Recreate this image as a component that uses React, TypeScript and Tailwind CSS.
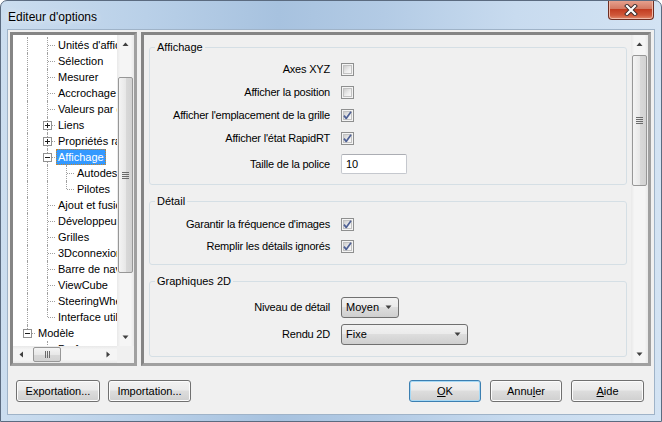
import React from 'react';

type Cell = 'none' | 'line' | 'tee' | 'elbow' | 'plus' | 'minus' | 'minusEnd';

type TreeRow = {
  label: string;
  cells: Cell[];
  selected?: boolean;
};

const FONT = "font-['Liberation_Sans',Arial,sans-serif]";

const CELL_W = ['w-[23px]', 'w-[20px]', 'w-[19px]'];
const V_LEFT = ['left-[14px]', 'left-[11px]', 'left-[10px]'];
const BOX_LEFT = ['left-[10px]', 'left-[7px]', 'left-[6px]'];
const H_FROM_LINE = ['left-[15px]', 'left-[12px]', 'left-[11px]'];
const H_FROM_BOX = ['left-[19px]', 'left-[16px]', 'left-[15px]'];

const L2: Cell[] = ['line', 'tee'];

const TREE_ROWS: TreeRow[] = [
  { label: "Unités d'affichage", cells: L2 },
  { label: 'Sélection', cells: L2 },
  { label: 'Mesurer', cells: L2 },
  { label: 'Accrochage', cells: L2 },
  { label: 'Valeurs par défaut', cells: L2 },
  { label: 'Liens', cells: ['line', 'plus'] },
  { label: 'Propriétés rapides', cells: ['line', 'plus'] },
  { label: 'Affichage', cells: ['line', 'minus'], selected: true },
  { label: 'Autodesk', cells: ['line', 'line', 'tee'] },
  { label: 'Pilotes', cells: ['line', 'line', 'elbow'] },
  { label: 'Ajout et fusion', cells: L2 },
  { label: 'Développeur', cells: L2 },
  { label: 'Grilles', cells: L2 },
  { label: '3Dconnexion', cells: L2 },
  { label: 'Barre de navigation', cells: L2 },
  { label: 'ViewCube', cells: L2 },
  { label: 'SteeringWheels', cells: L2 },
  { label: 'Interface utilisateur', cells: ['line', 'elbow'] },
  { label: 'Modèle', cells: ['minusEnd'] },
  { label: 'Performance', cells: ['none', 'tee'] },
];

const BUTTON_BG =
  'bg-[linear-gradient(#f2f2f2,#ebebeb_45%,#dddddd_50%,#cfcfcf)]';

function TreeCell({ type, index }: { type: Cell; index: number }) {
  const full = type === 'line' || type === 'tee' || type === 'plus' || type === 'minus';
  const half = type === 'elbow' || type === 'minusEnd';
  const box = type === 'plus' || type === 'minus' || type === 'minusEnd';
  const horiz = type !== 'none' && type !== 'line';
  const dotted = 'border-dotted border-[#a0a0a0]';

  return (
    <div className={`relative h-full shrink-0 ${CELL_W[index]}`}>
      {full && <div className={`absolute top-0 bottom-0 w-0 border-l ${dotted} ${V_LEFT[index]}`} />}
      {half && <div className={`absolute top-0 h-[8px] w-0 border-l ${dotted} ${V_LEFT[index]}`} />}
      {horiz && (
        <div
          className={`absolute top-[8px] right-[1px] h-0 border-t ${dotted} ${box ? H_FROM_BOX[index] : H_FROM_LINE[index]}`}
        />
      )}
      {box && (
        <div className={`absolute top-[4px] h-[9px] w-[9px] border border-[#919191] bg-white ${BOX_LEFT[index]}`}>
          <div className="absolute left-[1px] top-[3px] h-[1px] w-[5px] bg-[#1e1e1e]" />
          {type === 'plus' && <div className="absolute left-[3px] top-[1px] h-[5px] w-[1px] bg-[#1e1e1e]" />}
        </div>
      )}
    </div>
  );
}

function Arrow({ dir }: { dir: 'up' | 'down' | 'left' | 'right' }) {
  const points = {
    up: '0.5,4 3.5,0.5 6.5,4',
    down: '0.5,0.5 3.5,4 6.5,0.5',
    left: '4,0.5 0.5,3.5 4,6.5',
    right: '0.5,0.5 4,3.5 0.5,6.5',
  }[dir];
  const vertical = dir === 'up' || dir === 'down';
  return (
    <svg width={vertical ? 7 : 5} height={vertical ? 5 : 7} viewBox={vertical ? '0 0 7 5' : '0 0 5 7'}>
      <polygon points={points} fill="#404040" />
    </svg>
  );
}

function VScrollbar({ thumbTop, thumbHeight }: { thumbTop: string; thumbHeight: string }) {
  return (
    <div className="flex w-[17px] shrink-0 flex-col bg-[#f0f0f0] bg-[linear-gradient(to_right,#e9e9e9,#f5f5f5_20%,#f5f5f5_80%,#e9e9e9)]">
      <div className="flex h-[17px] items-center justify-center pt-[2px]">
        <Arrow dir="up" />
      </div>
      <div className="flex-1">
        <div
          className={`mx-auto flex w-[15px] flex-col items-center justify-center gap-[1px] rounded-[2px] border border-[#979797] bg-[linear-gradient(to_right,#f4f4f4,#e8e8e8_50%,#d9d9d9_50%,#d2d2d2)] ${thumbTop} ${thumbHeight}`}
        >
          <div className="h-[1px] w-[7px] bg-[#6b6b6b]" />
          <div className="h-[1px] w-[7px] bg-[#6b6b6b]" />
          <div className="h-[1px] w-[7px] bg-[#6b6b6b]" />
          <div className="h-[1px] w-[7px] bg-[#6b6b6b]" />
        </div>
      </div>
      <div className="flex h-[17px] items-center justify-center">
        <Arrow dir="down" />
      </div>
    </div>
  );
}

function Tree() {
  return (
    <div className="flex h-[334px] w-[127px] shrink-0 flex-col border-[3px] border-[#858585] border-r-[#a0a0a0] border-b-[#a0a0a0] bg-white">
      <div className="flex min-h-0 flex-1">
        <div className="w-[104px] shrink-0 overflow-hidden pt-[2px]">
          {TREE_ROWS.map((row) => (
            <div key={row.label} className="flex h-[16px] items-stretch">
              {row.cells.map((cell, i) => (
                <TreeCell key={i} type={cell} index={i} />
              ))}
              <span
                className={`whitespace-nowrap border px-[1px] text-[11px] leading-[14px] ${
                  row.selected
                    ? 'border-dotted border-[#c9862a] bg-[#3399ff] text-white'
                    : 'border-transparent text-black'
                }`}
              >
                {row.label}
              </span>
            </div>
          ))}
        </div>
        <VScrollbar thumbTop="mt-[25px]" thumbHeight="h-[196px]" />
      </div>
      <div className="flex h-[17px] shrink-0">
        <div className="flex w-[104px] items-center bg-[linear-gradient(#e9e9e9,#f5f5f5_20%,#f5f5f5_80%,#e9e9e9)]">
          <div className="flex w-[17px] items-center justify-center">
            <Arrow dir="left" />
          </div>
          <div className="ml-[3px] flex h-[15px] w-[28px] items-center justify-center gap-[1px] rounded-[2px] border border-[#979797] bg-[linear-gradient(#f4f4f4,#e8e8e8_50%,#d9d9d9_50%,#d2d2d2)]">
            <div className="h-[7px] w-[1px] bg-[#6b6b6b]" />
            <div className="h-[7px] w-[1px] bg-[#6b6b6b]" />
            <div className="h-[7px] w-[1px] bg-[#6b6b6b]" />
          </div>
          <div className="ml-auto flex w-[17px] items-center justify-center">
            <Arrow dir="right" />
          </div>
        </div>
        <div className="w-[17px] bg-[#f0f0f0]" />
      </div>
    </div>
  );
}

function Checkbox({ checked }: { checked?: boolean }) {
  return (
    <div className="relative h-[13px] w-[13px] border border-[#8e8f8f] bg-[#f4f4f4] p-[1px]">
      <div className="h-[9px] w-[9px] border border-[#c2c2c2] bg-[linear-gradient(135deg,#cdcdcd,#eeeeee_60%,#f8f8f8)]" />
      {checked && (
        <svg className="absolute left-0 top-0" width="11" height="11" viewBox="0 0 11 11">
          <path d="M2 5.6 L4.2 8.4 L9 1.8" fill="none" stroke="#4f6195" strokeWidth="1.7" strokeLinejoin="round" />
        </svg>
      )}
    </div>
  );
}

function Select({ value, width }: { value: string; width: string }) {
  return (
    <div
      className={`flex h-[21px] items-center justify-between rounded-[3px] border border-[#707070] pl-[4px] pr-[6px] text-[11px] ${BUTTON_BG} ${width}`}
    >
      <span>{value}</span>
      <Arrow dir="down" />
    </div>
  );
}

function Row({ label, height, children }: { label: string; height: string; children: React.ReactNode }) {
  return (
    <div className={`flex items-center ${height}`}>
      <div className="w-[180px] shrink-0 text-right text-[11px] tracking-[-0.2px] text-black">{label}</div>
      <div className="ml-[11px] flex items-center">{children}</div>
    </div>
  );
}

function Group({ title, className, children }: { title: string; className: string; children: React.ReactNode }) {
  return (
    <fieldset className={`rounded-[3px] border border-[#d5dfe5] ${className}`}>
      <legend className="ml-[5px] px-[2px] text-[11px] leading-[14px] text-black">{title}</legend>
      {children}
    </fieldset>
  );
}

function OptionsPanel() {
  return (
    <div className="flex h-[334px] flex-1 border-[3px] border-[#858585] border-r-[#a0a0a0] border-b-[#a0a0a0] bg-[#f0f0f0]">
      <div className="min-w-0 flex-1 overflow-hidden pl-[5px] pr-[4px] pt-[5px]">
        <Group title="Affichage" className="pb-[6px]">
          <div className="pt-[4px]">
            <Row label="Axes XYZ" height="h-[23px]">
              <Checkbox />
            </Row>
            <Row label="Afficher la position" height="h-[23px]">
              <Checkbox />
            </Row>
            <Row label="Afficher l'emplacement de la grille" height="h-[23px]">
              <Checkbox checked />
            </Row>
            <Row label="Afficher l'état RapidRT" height="h-[23px]">
              <Checkbox checked />
            </Row>
            <Row label="Taille de la police" height="h-[28px]">
              <div className="flex h-[20px] w-[66px] items-center rounded-[2px] border border-[#c5c8ce] border-t-[#abadb3] bg-white pl-[4px] text-[11px]">
                10
              </div>
            </Row>
          </div>
        </Group>
        <Group title="Détail" className="mt-[9px] pb-[7px]">
          <div className="pt-[5px]">
            <Row label="Garantir la fréquence d'images" height="h-[22px]">
              <Checkbox checked />
            </Row>
            <Row label="Remplir les détails ignorés" height="h-[22px]">
              <Checkbox checked />
            </Row>
          </div>
        </Group>
        <Group title="Graphiques 2D" className="mt-[9px] pb-[8px]">
          <div className="pt-[6px]">
            <Row label="Niveau de détail" height="h-[27px]">
              <Select value="Moyen" width="w-[58px]" />
            </Row>
            <Row label="Rendu 2D" height="h-[27px]">
              <Select value="Fixe" width="w-[127px]" />
            </Row>
          </div>
        </Group>
      </div>
      <VScrollbar thumbTop="mt-[3px]" thumbHeight="h-[131px]" />
    </div>
  );
}

function Button({
  children,
  width,
  primary,
}: {
  children: React.ReactNode;
  width: string;
  primary?: boolean;
}) {
  return (
    <div
      className={`flex h-[22px] items-center justify-center rounded-[3px] border text-[11px] text-black ${BUTTON_BG} ${width} ${
        primary ? 'border-[#3c7fb1] shadow-[inset_0_0_0_1px_#a7d9f5]' : 'border-[#707070] shadow-[inset_0_0_0_1px_#fcfcfc]'
      }`}
    >
      {children}
    </div>
  );
}

export default function App() {
  return (
    <div
      className={`flex h-[422px] w-[662px] flex-col overflow-hidden rounded-t-[7px] border border-[#5b6b80] px-[6px] pb-[6px] bg-[linear-gradient(90deg,#cbddef_0%,#b9d0e8_22%,#a7c2df_42%,#b3cbe5_58%,#c8dbef_78%,#d3e3f3_100%)] ${FONT}`}
    >
      <div className="relative flex h-[28px] shrink-0 items-center pl-[1px] pt-[3px]">
        <span className="text-[12px] text-black [text-shadow:0_0_6px_#ffffff]">Editeur d'options</span>
        <div className="absolute right-[1px] top-[-1px] flex h-[20px] w-[46px] items-center justify-center rounded-b-[4px] border border-t-0 border-[#6e2e22] bg-[linear-gradient(#e8a592,#d47a63_45%,#c23d21_50%,#d0583a_80%,#e18b6e)] shadow-[inset_0_0_0_1px_#f0b9a8]">
          <svg width="14" height="12" viewBox="0 0 14 12">
            <path d="M3 2 L11 10 M11 2 L3 10" stroke="#3a2a2a" strokeWidth="4" strokeLinecap="square" />
            <path d="M3 2 L11 10 M11 2 L3 10" stroke="#ffffff" strokeWidth="2.2" strokeLinecap="square" />
          </svg>
        </div>
      </div>
      <div className="flex min-h-0 flex-1 flex-col border border-[#9fb3c8] bg-[#f0f0f0]">
        <div className="flex gap-[4px] pl-[2px] pr-[3px] pt-[2px]">
          <Tree />
          <OptionsPanel />
        </div>
        <div className="mt-[14px] flex items-center px-[8px]">
          <Button width="w-[84px]">Exportation...</Button>
          <div className="ml-[8px]">
            <Button width="w-[83px]">Importation...</Button>
          </div>
          <div className="ml-auto flex gap-[9px] pr-[2px]">
            <Button width="w-[72px]" primary>
              <span>
                <span className="underline">O</span>K
              </span>
            </Button>
            <Button width="w-[72px]">
              <span>
                Annu<span className="underline">l</span>er
              </span>
            </Button>
            <Button width="w-[73px]">
              <span>
                <span className="underline">A</span>ide
              </span>
            </Button>
          </div>
        </div>
      </div>
    </div>
  );
}
